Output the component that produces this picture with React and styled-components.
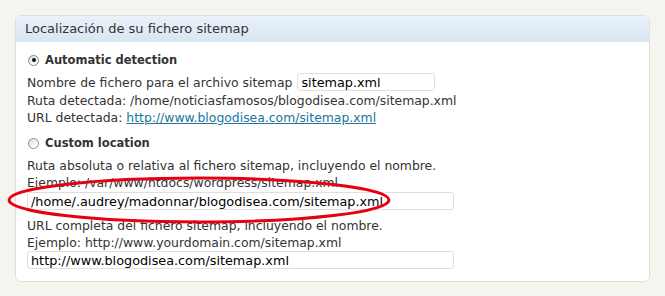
import React from 'react';
import styled, { createGlobalStyle } from 'styled-components';

const GlobalStyle = createGlobalStyle`
  html, body {
    margin: 0;
    padding: 0;
    background: #f5f4ef;
  }
  body {
    font-family: "DejaVu Sans", Verdana, sans-serif;
    font-size: 12.4px;
    color: #333;
  }
`;

const Page = styled.div`
  position: relative;
  padding: 15px 15px 13px 15px;
  width: 665px;
  box-sizing: border-box;
`;

const Box = styled.div`
  background: #fff;
  border: 1px solid #dfdfdf;
  border-radius: 6px;
  overflow: hidden;
`;

const BoxHeader = styled.h3`
  margin: 0;
  height: 26px;
  line-height: 26px;
  padding-left: 9px;
  font-size: 13px;
  font-weight: normal;
  color: #333;
  background: linear-gradient(to bottom, #eaf2fa, #d7e6f2);
`;

const BoxBody = styled.div`
  padding: 9px 11px 12px 11px;
`;

const RadioRow = styled.label`
  display: flex;
  align-items: center;
  height: 18px;
  margin-top: ${p => p.$top || 0}px;
  font-size: 11.5px;
  font-weight: bold;
  color: #333;
`;

const Radio = styled.span`
  position: relative;
  width: 11px;
  height: 11px;
  margin: 0 6px 0 1px;
  border-radius: 50%;
  border: 1px solid #8a8a8a;
  background: linear-gradient(135deg, #d8d8d8, #fff 70%);
  box-sizing: border-box;

  &::after {
    content: '';
    display: ${p => (p.$checked ? 'block' : 'none')};
    position: absolute;
    left: 2.5px;
    top: 2.5px;
    width: 4px;
    height: 4px;
    border-radius: 50%;
    background: #111;
  }
`;

const FieldRow = styled.div`
  display: flex;
  align-items: center;
  height: 20px;
  margin-top: 3px;
  white-space: nowrap;
`;

const Line = styled.div`
  line-height: 17px;
  margin-top: ${p => p.$top || 0}px;
  white-space: nowrap;
`;

const Link = styled.a`
  color: #21759b;
  text-decoration: underline;
`;

const TextInput = styled.input`
  display: block;
  box-sizing: border-box;
  width: ${p => p.$width}px;
  height: 18px;
  margin: ${p => p.$margin || '0'};
  padding: 0 3px;
  border: 1px solid #dfdfdf;
  border-radius: 3px;
  background: #fff;
  font-family: "DejaVu Sans", Verdana, sans-serif;
  font-size: 12.8px;
  color: #000;
  outline: none;
`;

const Annotation = styled.svg`
  position: absolute;
  left: 0;
  top: 0;
  pointer-events: none;
`;

export default function App() {
  return (
    <>
      <GlobalStyle />
      <Page>
        <Box>
          <BoxHeader>Localización de su fichero sitemap</BoxHeader>
          <BoxBody>
            <RadioRow>
              <Radio $checked />
              Automatic detection
            </RadioRow>
            <FieldRow>
              Nombre de fichero para el archivo sitemap
              <TextInput $width={138} $margin="0 0 0 5px" defaultValue="sitemap.xml" />
            </FieldRow>
            <Line>Ruta detectada: /home/noticiasfamosos/blogodisea.com/sitemap.xml</Line>
            <Line>
              URL detectada: <Link href="#">http://www.blogodisea.com/sitemap.xml</Link>
            </Line>

            <RadioRow $top={8}>
              <Radio />
              Custom location
            </RadioRow>
            <Line $top={5}>Ruta absoluta o relativa al fichero sitemap, incluyendo el nombre.</Line>
            <Line>Ejemplo: /var/www/htdocs/wordpress/sitemap.xml</Line>
            <TextInput
              $width={427}
              $margin="1px 0 0 0"
              defaultValue="/home/.audrey/madonnar/blogodisea.com/sitemap.xml"
            />
            <Line $top={7}>URL completa del fichero sitemap, incluyendo el nombre.</Line>
            <Line>Ejemplo: http://www.yourdomain.com/sitemap.xml</Line>
            <TextInput $width={427} defaultValue="http://www.blogodisea.com/sitemap.xml" />
          </BoxBody>
        </Box>
        <Annotation width="665" height="296" viewBox="0 0 665 296">
          <ellipse cx="199" cy="200" rx="190" ry="22" fill="none" stroke="#e60012" strokeWidth="3" />
        </Annotation>
      </Page>
    </>
  );
}
